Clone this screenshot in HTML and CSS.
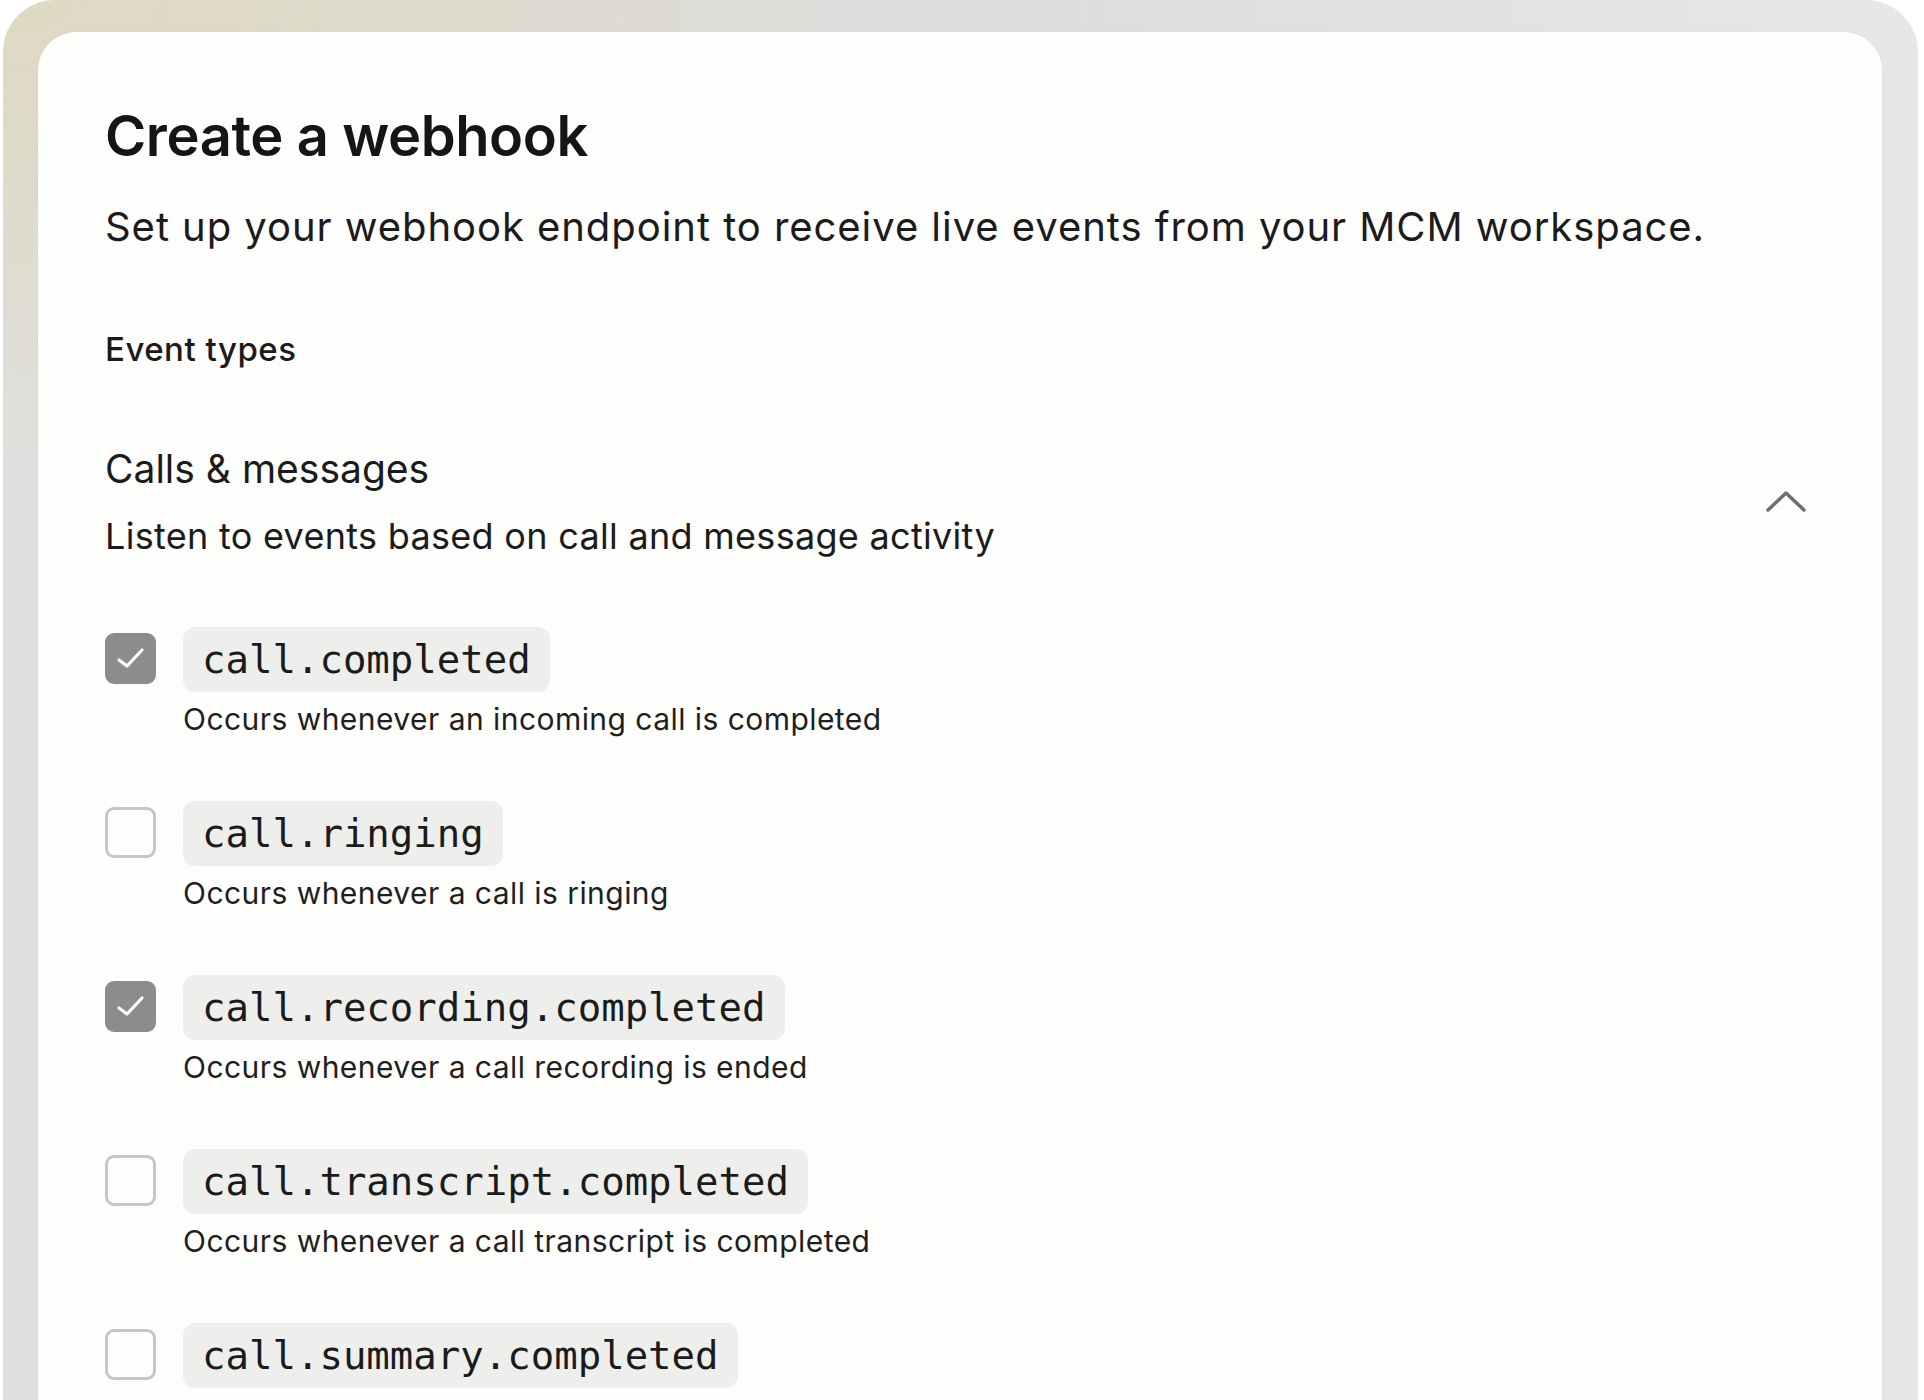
FILE: index.html
```html
<!DOCTYPE html>
<html lang="en">
<head>
<meta charset="utf-8">
<title>Create a webhook</title>
<link rel="stylesheet" href="styles.css">
</head>
<body>
<div class="frame">
  <main class="card">
    <h1 class="title">Create a webhook</h1>
    <p class="subtitle">Set up your webhook endpoint to receive live events from your MCM workspace.</p>
    <h2 class="section-label">Event types</h2>

    <section class="group">
      <div class="group-head">
        <div class="group-text">
          <h3 class="group-title">Calls &amp; messages</h3>
          <p class="group-desc">Listen to events based on call and message activity</p>
        </div>
        <svg class="chevron" width="42" height="24" viewBox="0 0 42 24" aria-hidden="true">
          <polyline points="3,21 21,4 39,21" fill="none" stroke="#6e6e6e" stroke-width="3.5" stroke-linecap="round" stroke-linejoin="round"/>
        </svg>
      </div>

      <ul class="events">
        <li class="event">
          <span class="box checked"><svg width="50" height="50" viewBox="0 0 50 50"><polyline points="14,27 22,33 37,17" fill="none" stroke="#fff" stroke-width="3.2" stroke-linecap="round" stroke-linejoin="round"/></svg></span>
          <div class="event-body">
            <code class="pill">call.completed</code>
            <p class="event-desc">Occurs whenever an incoming call is completed</p>
          </div>
        </li>
        <li class="event">
          <span class="box"></span>
          <div class="event-body">
            <code class="pill">call.ringing</code>
            <p class="event-desc">Occurs whenever a call is ringing</p>
          </div>
        </li>
        <li class="event">
          <span class="box checked"><svg width="50" height="50" viewBox="0 0 50 50"><polyline points="14,27 22,33 37,17" fill="none" stroke="#fff" stroke-width="3.2" stroke-linecap="round" stroke-linejoin="round"/></svg></span>
          <div class="event-body">
            <code class="pill">call.recording.completed</code>
            <p class="event-desc">Occurs whenever a call recording is ended</p>
          </div>
        </li>
        <li class="event">
          <span class="box"></span>
          <div class="event-body">
            <code class="pill">call.transcript.completed</code>
            <p class="event-desc">Occurs whenever a call transcript is completed</p>
          </div>
        </li>
        <li class="event">
          <span class="box"></span>
          <div class="event-body">
            <code class="pill">call.summary.completed</code>
            <p class="event-desc">Occurs whenever a call summary is completed</p>
          </div>
        </li>
      </ul>
    </section>
  </main>
</div>
</body>
</html>
```

FILE: styles.css
```css
* { box-sizing: border-box; }

html, body {
  margin: 0;
  padding: 0;
  background: #ffffff;
  overflow: hidden;
  height: 1400px;
}

body {
  font-family: Inter, "Noto Sans", "Liberation Sans", sans-serif;
  color: #1b1b1b;
}

.frame {
  margin: 0 6px 0 3px;
  padding: 32px 36px 0 35px;
  min-height: 1500px;
  border-radius: 52px 52px 0 0;
  background:
    radial-gradient(ellipse 900px 460px at 0% 0%, rgba(222,217,194,1) 0%, rgba(222,217,194,0.65) 45%, rgba(222,217,194,0) 100%),
    linear-gradient(90deg, #dfdfdd 0%, #dcdcdc 50%, #e7e7e7 100%);
}

.card {
  background: #fdfdfb;
  border-radius: 38px 38px 0 0;
  min-height: 1500px;
  padding: 69px 77px 0 67px;
  box-shadow: 0 0 2px rgba(0,0,0,0.06);
}

.title {
  margin: 0;
  font-size: 56px;
  line-height: 70px;
  font-weight: 600;
  letter-spacing: -0.4px;
  color: #151515;
}

.subtitle {
  margin: 32px 0 0;
  font-size: 40px;
  line-height: 48px;
  font-weight: 400;
  letter-spacing: 0.95px;
  color: #1b1b1b;
}

.section-label {
  margin: 78px 0 0;
  font-size: 33px;
  line-height: 40px;
  font-weight: 500;
  letter-spacing: 0.5px;
  color: #1b1b1b;
}

.group {
  margin-top: 76px;
}

.group-head {
  display: flex;
  align-items: center;
  justify-content: space-between;
}

.group-title {
  margin: 0;
  font-size: 39px;
  line-height: 48px;
  font-weight: 400;
  color: #1b1b1b;
}

.group-desc {
  margin: 21px 0 0;
  font-size: 36px;
  line-height: 44px;
  letter-spacing: 0.3px;
  color: #1b1b1b;
}

.chevron {
  display: block;
  margin-right: -2px;
  margin-top: -1px;
}

.events {
  list-style: none;
  margin: 69px 0 0;
  padding: 0;
  display: flex;
  flex-direction: column;
  gap: 64px;
}

.event {
  display: flex;
  align-items: flex-start;
  gap: 27px;
}

.box {
  flex: 0 0 51px;
  width: 51px;
  height: 51px;
  margin-top: 6px;
  border-radius: 9px;
  border: 3px solid #c6c6c6;
  background: #fdfdfb;
}

.box.checked {
  border: none;
  background: #8c8c8c;
}

.box svg { display: block; }

.event-body {
  display: flex;
  flex-direction: column;
  align-items: flex-start;
}

.pill {
  display: inline-block;
  height: 65px;
  padding: 0 19px;
  border-radius: 12px;
  background: #eeeeed;
  font-family: "DejaVu Sans Mono", "Liberation Mono", monospace;
  font-size: 39px;
  line-height: 65px;
  color: #1b1b1b;
}

.event-desc {
  margin: 9px 0 0;
  font-size: 30px;
  line-height: 36px;
  letter-spacing: 0.45px;
  color: #1f1f1f;
}
```
